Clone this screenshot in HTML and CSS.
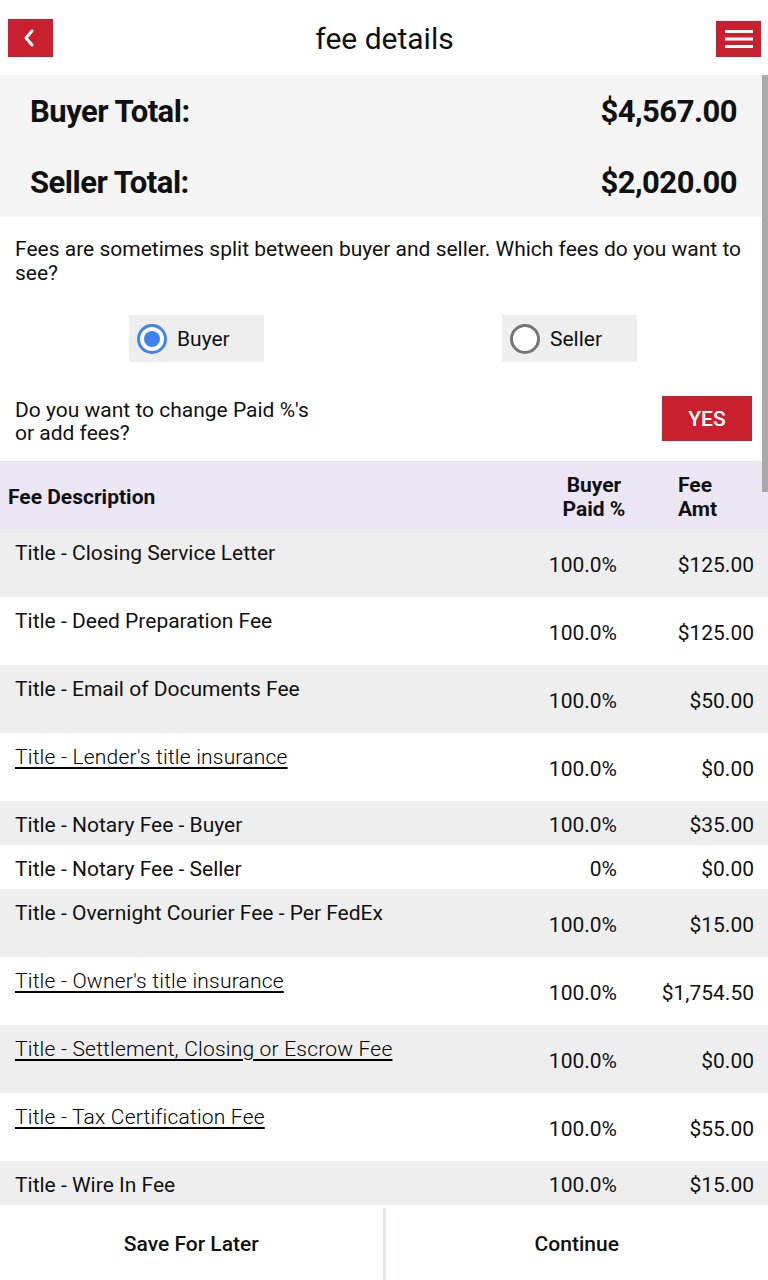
FILE: index.html
```html
<!DOCTYPE html>
<html>
<head>
<meta charset="utf-8">
<link rel="stylesheet" href="styles.css">
</head>
<body>
<div class="page">
  <header class="topbar">
    <button class="icon-btn back" aria-label="Back">
      <svg width="16" height="22" viewBox="0 0 16 22"><path d="M11 4 L5 11 L11 18" fill="none" stroke="#fff" stroke-width="3" stroke-linecap="round" stroke-linejoin="round"/></svg>
    </button>
    <h1 class="title">fee details</h1>
    <button class="icon-btn menu" aria-label="Menu">
      <svg width="30" height="20" viewBox="0 0 30 20"><rect x="1" y="1" width="28" height="3" fill="#fff"/><rect x="1" y="8.5" width="28" height="3" fill="#fff"/><rect x="1" y="16" width="28" height="3" fill="#fff"/></svg>
    </button>
  </header>

  <div class="content">
    <section class="totals">
      <div class="total-row"><span>Buyer Total:</span><span>$4,567.00</span></div>
      <div class="total-row"><span>Seller Total:</span><span>$2,020.00</span></div>
    </section>

    <p class="intro">Fees are sometimes split between buyer and seller. Which fees do you want to see?</p>

    <div class="radios">
      <div class="radio-box"><span class="radio checked"></span><span>Buyer</span></div>
      <div class="radio-box"><span class="radio"></span><span>Seller</span></div>
    </div>

    <div class="change">
      <p class="change-text">Do you want to change Paid %'s<br>or add fees?</p>
      <button class="yes">YES</button>
    </div>

    <div class="table">
      <div class="thead">
        <div class="th desc">Fee Description</div>
        <div class="th pct">Buyer<br>Paid %</div>
        <div class="th amt">Fee<br>Amt</div>
      </div>
      <div class="row tall grey"><div class="desc">Title - Closing Service Letter</div><div class="pct">100.0%</div><div class="amt">$125.00</div></div>
      <div class="row tall"><div class="desc">Title - Deed Preparation Fee</div><div class="pct">100.0%</div><div class="amt">$125.00</div></div>
      <div class="row tall grey"><div class="desc">Title - Email of Documents Fee</div><div class="pct">100.0%</div><div class="amt">$50.00</div></div>
      <div class="row tall"><div class="desc link">Title - Lender's title insurance</div><div class="pct">100.0%</div><div class="amt">$0.00</div></div>
      <div class="row grey"><div class="desc">Title - Notary Fee - Buyer</div><div class="pct">100.0%</div><div class="amt">$35.00</div></div>
      <div class="row"><div class="desc">Title - Notary Fee - Seller</div><div class="pct">0%</div><div class="amt">$0.00</div></div>
      <div class="row tall grey"><div class="desc">Title - Overnight Courier Fee - Per FedEx</div><div class="pct">100.0%</div><div class="amt">$15.00</div></div>
      <div class="row tall"><div class="desc link">Title - Owner's title insurance</div><div class="pct">100.0%</div><div class="amt">$1,754.50</div></div>
      <div class="row tall grey"><div class="desc link">Title - Settlement, Closing or Escrow Fee</div><div class="pct">100.0%</div><div class="amt">$0.00</div></div>
      <div class="row tall"><div class="desc link">Title - Tax Certification Fee</div><div class="pct">100.0%</div><div class="amt">$55.00</div></div>
      <div class="row grey"><div class="desc">Title - Wire In Fee</div><div class="pct">100.0%</div><div class="amt">$15.00</div></div>
    </div>
    <div class="scrollbar"></div>
  </div>

  <footer class="footer">
    <button class="foot-btn">Save For Later</button>
    <div class="divider"></div>
    <button class="foot-btn">Continue</button>
  </footer>
</div>
</body>
</html>
```

FILE: styles.css
```css
* { box-sizing: border-box; }
html, body { margin: 0; padding: 0; }
body {
  font-family: Roboto, "Noto Sans", sans-serif;
  color: #111;
  background: #fff;
  width: 768px;
  height: 1280px;
  overflow: hidden;
}
.page { display: flex; flex-direction: column; height: 1280px; }

.topbar {
  height: 75px;
  display: flex;
  align-items: center;
  justify-content: space-between;
  padding: 0 7px 0 8px;
  flex: none;
}
.icon-btn {
  border: none;
  background: #c8202f;
  padding: 0;
  display: flex;
  align-items: center;
  justify-content: center;
  cursor: pointer;
}
.back { width: 45px; height: 38px; padding-right: 4px; }
.menu { width: 45px; height: 36px; margin-top: 2px; }
.title {
  margin: 0;
  font-size: 30px;
  font-weight: 400;
  color: #111;
  padding-top: 2px;
}

.content { flex: 1; position: relative; overflow: hidden; }
.scrollbar {
  position: absolute;
  right: 0;
  top: 0;
  width: 6px;
  height: 417px;
  background: #aaaaaa;
}

.totals { background: #f4f4f4; padding: 0 31px 0 30px; }
.total-row {
  height: 71px;
  display: flex;
  justify-content: space-between;
  align-items: center;
  font-size: 31px;
  font-weight: 700;
  letter-spacing: -0.5px;
  padding-top: 2px;
}

.intro {
  margin: 0;
  padding: 20px 20px 0 15px;
  font-size: 21px;
  line-height: 24px;
}

.radios {
  display: flex;
  padding: 30px 0 0 129px;
  gap: 238px;
}
.radio-box {
  width: 135px;
  height: 47px;
  background: #eeeeee;
  display: flex;
  align-items: center;
  gap: 10px;
  padding-left: 8px;
  font-size: 21px;
}
.radio {
  width: 30px;
  height: 30px;
  border-radius: 50%;
  border: 3px solid #757575;
  background: #fff;
  position: relative;
  flex: none;
}
.radio.checked { border-color: #3d84f0; }
.radio.checked::after {
  content: "";
  position: absolute;
  left: 4px; top: 4px;
  width: 16px; height: 16px;
  border-radius: 50%;
  background: #3d84f0;
}

.change {
  display: flex;
  justify-content: space-between;
  align-items: flex-start;
  padding: 34px 16px 16px 15px;
}
.change-text { margin: 0; font-size: 21px; line-height: 23px; padding-top: 3px; }
.yes {
  width: 90px;
  height: 45px;
  border: none;
  background: #c8202f;
  color: #fff;
  font-family: Roboto, sans-serif;
  font-size: 21px;
  font-weight: 500;
  cursor: pointer;
}

.thead {
  background: #ece6f4;
  height: 68px;
  display: grid;
  grid-template-columns: 1fr 124px 90px;
  align-items: center;
  font-weight: 700;
  font-size: 21px;
  padding-top: 4px;
}
.th.desc { padding-left: 8px; }
.th.pct { text-align: center; line-height: 24px; padding-right: 44px; white-space: nowrap; }
.th.amt { line-height: 24px; }

.row {
  display: grid;
  grid-template-columns: 1fr 120px 151px;
  height: 44px;
  font-size: 21px;
  line-height: 24px;
}
.row.tall { height: 68px; }
.row.grey { background: #eeeeee; }
.row .desc { padding: 12px 0 0 15px; }
.row .pct, .row .amt { align-self: center; text-align: right; padding-top: 4px; }
.row .amt { padding-right: 14px; }
.desc.link { text-decoration: underline; text-underline-offset: 3px; letter-spacing: 0.2px; font-weight: 300; color: #000; }

.footer {
  height: 75px;
  flex: none;
  display: flex;
  align-items: stretch;
  background: #fff;
}
.foot-btn {
  flex: 1;
  border: none;
  background: #fff;
  font-family: Roboto, sans-serif;
  font-size: 21px;
  font-weight: 500;
  color: #111;
  cursor: pointer;
  padding-top: 4px;
}
.divider { width: 3px; background: #e4e4ec; margin-top: 3px; }
```
